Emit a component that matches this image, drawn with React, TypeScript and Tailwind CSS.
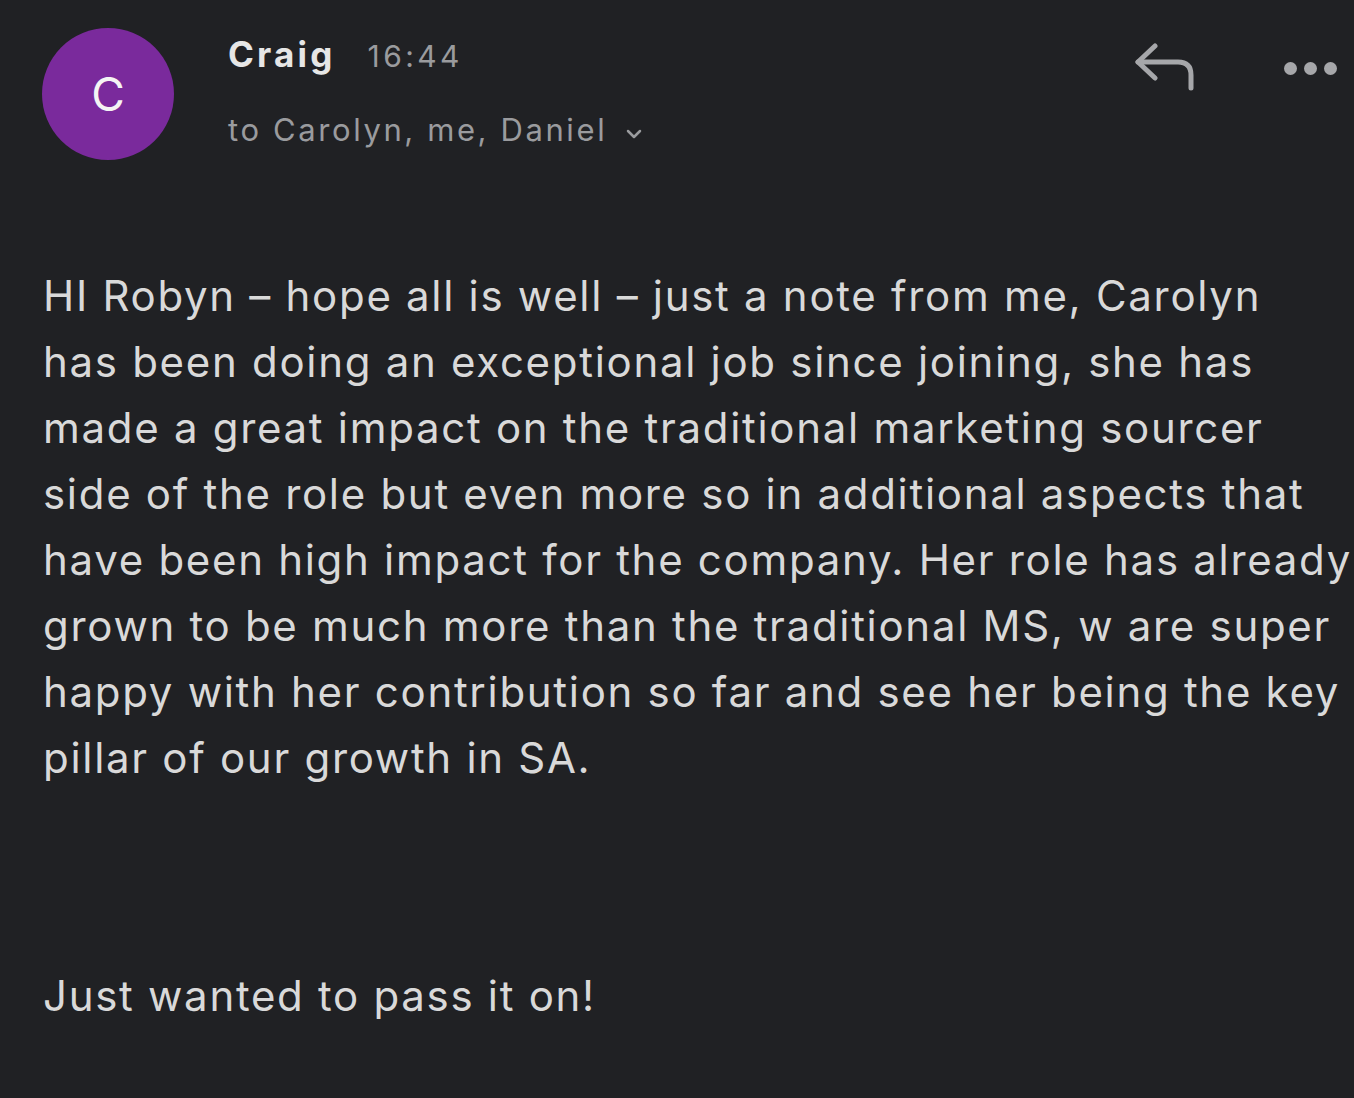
import React from "react";

const lines = [
  "HI Robyn – hope all is well – just a note from me, Carolyn",
  "has been doing an exceptional job since joining, she has",
  "made a great impact on the traditional marketing sourcer",
  "side of the role but even more so in additional aspects that",
  "have been high impact for the company. Her role has already",
  "grown to be much more than the traditional MS, w are super",
  "happy with her contribution so far and see her being the key",
  "pillar of our growth in SA.",
];

export default function App() {
  const font = { fontFamily: "Inter, 'Noto Sans', sans-serif" };
  return (
    <div className="w-[1354px] h-[1098px] bg-[#202124] overflow-hidden" style={font}>
      <div className="flex items-start pl-[42px] pr-[17px] pt-[28px]">
        <div className="w-[132px] h-[132px] rounded-full bg-[#7a2a9c] flex items-center justify-center text-[#f4f4f4] text-[46px] shrink-0">
          C
        </div>
        <div className="ml-[54px] flex-1">
          <div className="flex items-baseline">
            <span className="text-[35px] font-bold text-[#e6e6e6] tracking-[3.2px]">Craig</span>
            <span className="ml-[32px] text-[30px] text-[#9a9b9e] tracking-[3.4px]">16:44</span>
          </div>
          <div className="flex items-center mt-[26px] text-[31px] text-[#9a9b9e] tracking-[2.6px]">
            <span>to Carolyn, me, Daniel</span>
            <svg className="ml-[16px] mt-[8px]" width="22" height="14" viewBox="0 0 22 14" fill="none" stroke="#9a9b9e" strokeWidth="2.5" strokeLinecap="round" strokeLinejoin="round">
              <path d="M5 4 L11 10 L17 4" />
            </svg>
          </div>
        </div>
        <div className="flex items-center gap-[86px] pt-[15px]">
          <svg width="64" height="50" viewBox="0 0 64 50" fill="none" stroke="#a6a7aa" strokeWidth="5" strokeLinecap="round" strokeLinejoin="round">
            <path d="M21 3 L4 19 L21 35" />
            <path d="M4 19 H44 Q57 19 57 32 V45" />
          </svg>
          <div className="flex gap-[7px]">
            <span className="w-[13px] h-[13px] rounded-full bg-[#a6a7aa]" />
            <span className="w-[13px] h-[13px] rounded-full bg-[#a6a7aa]" />
            <span className="w-[13px] h-[13px] rounded-full bg-[#a6a7aa]" />
          </div>
        </div>
      </div>
      <div className="pl-[43px] mt-[103px] text-[42px] leading-[66px] text-[#d9d9d9] tracking-[1.7px]">
        <div>
          {lines.map((l, i) => (
            <div key={i} className="whitespace-nowrap">{l}</div>
          ))}
        </div>
        <p className="mt-[172px] whitespace-nowrap">Just wanted to pass it on!</p>
      </div>
    </div>
  );
}
